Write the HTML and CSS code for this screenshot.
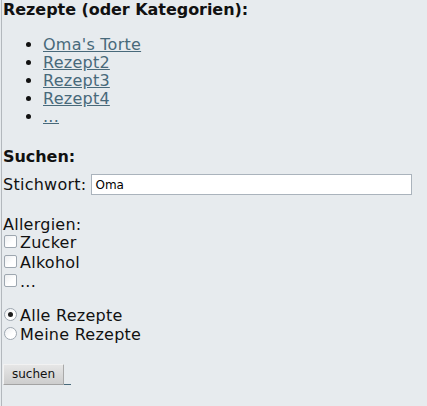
FILE: index.html
```html
<!DOCTYPE html>
<html lang="de">
<head>
<meta charset="utf-8">
<title>Rezepte</title>
<link rel="stylesheet" href="styles.css">
</head>
<body>
<div class="page">
  <h2 class="title">Rezepte (oder Kategorien):</h2>
  <ul class="recipes">
    <li><a href="#">Oma's Torte</a></li>
    <li><a href="#">Rezept2</a></li>
    <li><a href="#">Rezept3</a></li>
    <li><a href="#">Rezept4</a></li>
    <li><a href="#">...</a></li>
  </ul>
  <form class="search" onsubmit="return false">
    <h3 class="title search-title">Suchen:</h3>
    <div class="field">
      <label for="q">Stichwort:</label>
      <input id="q" class="text-input" type="text" value="Oma">
    </div>
    <div class="allergies">
      <div class="group-label">Allergien:</div>
      <label class="choice"><input type="checkbox" class="box"><span>Zucker</span></label>
      <label class="choice"><input type="checkbox" class="box"><span>Alkohol</span></label>
      <label class="choice"><input type="checkbox" class="box"><span>...</span></label>
    </div>
    <div class="scope">
      <label class="choice"><input type="radio" name="scope" class="radio" checked><span>Alle Rezepte</span></label>
      <label class="choice"><input type="radio" name="scope" class="radio"><span>Meine Rezepte</span></label>
    </div>
    <div class="actions">
      <button type="submit" class="btn">suchen</button><span class="trail"></span>
    </div>
  </form>
</div>
</body>
</html>
```

FILE: styles.css
```css
html, body {
  margin: 0;
  padding: 0;
  background: #e7ebee;
}

body {
  font-family: "DejaVu Sans", "Liberation Sans", sans-serif;
  font-size: 16px;
  color: #111;
  letter-spacing: 0.25px;
}

.page {
  margin-left: 1px;
  padding-left: 1px;
  border-left: 1px solid #b3b8bd;
  min-height: 406px;
  box-sizing: border-box;
}

.title {
  margin: 0;
  font-size: 16px;
  font-weight: bold;
  line-height: 19px;
  letter-spacing: -0.05px;
}

.recipes {
  margin: 17px 0 0;
  padding-left: 40px;
  line-height: 18px;
}

.recipes a {
  color: #48697a;
  text-decoration: underline;
}

.search {
  margin: 0;
}

.search-title {
  margin-top: 21px;
}

.field {
  display: flex;
  align-items: center;
  gap: 5px;
  margin-top: 8px;
  height: 21px;
}

.text-input {
  box-sizing: border-box;
  width: 321px;
  height: 21px;
  margin: 0;
  padding: 0 3px;
  border: 1px solid #aab3bc;
  background: #fff;
  font-family: "DejaVu Sans", sans-serif;
  font-size: 12px;
  letter-spacing: 0;
  color: #000;
  outline: none;
}

.allergies {
  margin-top: 21px;
}

.group-label {
  line-height: 18px;
  margin-bottom: 1px;
}

.choice {
  display: flex;
  align-items: flex-start;
  height: 19.5px;
  line-height: 16px;
}

.box,
.radio {
  appearance: none;
  -webkit-appearance: none;
  box-sizing: border-box;
  width: 13px;
  height: 13px;
  margin: 0 3px 0 1px;
  border: 1px solid #9ea7b0;
  background: linear-gradient(135deg, #eceef0, #ffffff 60%);
  flex: none;
}

.box {
  border-radius: 2px;
}

.radio {
  border-radius: 50%;
  position: relative;
}

.radio:checked::after {
  content: "";
  position: absolute;
  left: 3px;
  top: 3px;
  width: 5px;
  height: 5px;
  border-radius: 50%;
  background: #1e1e1e;
}

.scope {
  margin-top: 14px;
}

.actions {
  display: flex;
  align-items: flex-end;
  margin-top: 17px;
}

.btn {
  box-sizing: border-box;
  height: 21px;
  width: 61px;
  margin: 0;
  padding: 0;
  font-family: "DejaVu Sans", sans-serif;
  font-size: 12px;
  letter-spacing: 0;
  color: #111;
  background: linear-gradient(#e6e6e6, #cdcdcd);
  border: 1px solid;
  border-color: #f2f2f2 #a9a9a9 #a3a3a3 #f2f2f2;
  border-radius: 1px;
}

.trail {
  display: block;
  width: 7px;
  height: 1px;
  background: #48697a;
}
```
